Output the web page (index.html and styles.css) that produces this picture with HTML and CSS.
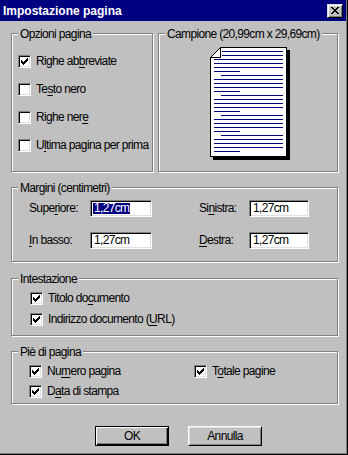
FILE: index.html
```html
<!DOCTYPE html>
<html lang="it">
<head>
<meta charset="utf-8">
<title>Impostazione pagina</title>
<link rel="stylesheet" href="styles.css">
</head>
<body>
<div class="window">
  <div class="titlebar">
    <span class="title">Impostazione pagina</span>
    <span class="close"><svg class="xglyph" width="8" height="7" viewBox="0 0 8 7"><path d="M0 0h2v1H0zM6 0h2v1H6zM1 1h2v1H1zM5 1h2v1H5zM2 2h4v1H2zM3 3h2v1H3zM2 4h4v1H2zM1 5h2v1H1zM5 5h2v1H5zM0 6h2v1H0zM6 6h2v1H6z"/></svg></span>
  </div>
  <div class="content">
    <div class="row1">
      <fieldset class="group g-opts">
        <legend>Opzioni pagina</legend>
        <div class="opts">
          <div class="chk"><span class="cb"><svg class="ck" width="7" height="7" viewBox="0 0 7 7"><path d="M0 2h1v3H0zM1 3h1v3H1zM2 4h1v3H2zM3 3h1v3H3zM4 2h1v3H4zM5 1h1v3H5zM6 0h1v3H6z"/></svg></span><span>Righe ab<u>b</u>reviate</span></div>
          <div class="chk"><span class="cb"></span><span>Te<u>s</u>to nero</span></div>
          <div class="chk"><span class="cb"></span><span>Righe ner<u>e</u></span></div>
          <div class="chk"><span class="cb"></span><span>U<u>l</u>tima pagina per prima</span></div>
        </div>
      </fieldset>
      <fieldset class="group g-sample">
        <legend>Campione (20,99cm x 29,69cm)</legend>
        <div class="sample">
          <svg width="80" height="113" viewBox="0 0 80 113" shape-rendering="crispEdges">
            <rect x="77" y="3" width="3" height="110" fill="#000"/>
            <rect x="3" y="110" width="77" height="3" fill="#000"/>
            <path d="M10.5 0.5H76.5V109.5H0.5V10.5Z" fill="#fff" stroke="#000"/>
            <path d="M0.5 10.5H10.5V0.5" fill="none" stroke="#000"/>
            <path fill="none" stroke="#000080" d="M12 4.5H73M12 8.5H73M4 12.5H73M4 16.5H73M4 20.5H73M4 24.5H30M11 28.5H73M4 32.5H73M4 36.5H73M4 40.5H73M4 44.5H30M11 48.5H73M4 52.5H73M4 56.5H73M4 60.5H73M4 64.5H30M11 68.5H73M4 72.5H73M4 76.5H73M4 80.5H73M4 84.5H30M11 88.5H73M4 92.5H73M4 96.5H73M4 100.5H73M4 104.5H30"/>
          </svg>
        </div>
      </fieldset>
    </div>

    <fieldset class="group g-margins">
      <legend>Margini (centimetri)</legend>
      <div class="margins">
        <span class="lbl">Supe<u>r</u>iore:</span>
        <div class="field w62"><span class="val sel">1,27cm</span></div>
        <span class="lbl">Si<u>n</u>istra:</span>
        <div class="field w60"><span class="val">1,27cm</span></div>
        <span class="lbl"><u>I</u>n basso:</span>
        <div class="field w62"><span class="val">1,27cm</span></div>
        <span class="lbl"><u>D</u>estra:</span>
        <div class="field w60"><span class="val">1,27cm</span></div>
      </div>
    </fieldset>

    <fieldset class="group g-head">
      <legend>Intestazione</legend>
      <div class="checks">
        <div class="chk"><span class="cb"><svg class="ck" width="7" height="7" viewBox="0 0 7 7"><path d="M0 2h1v3H0zM1 3h1v3H1zM2 4h1v3H2zM3 3h1v3H3zM4 2h1v3H4zM5 1h1v3H5zM6 0h1v3H6z"/></svg></span><span>Titolo do<u>c</u>umento</span></div>
        <div class="chk"><span class="cb"><svg class="ck" width="7" height="7" viewBox="0 0 7 7"><path d="M0 2h1v3H0zM1 3h1v3H1zM2 4h1v3H2zM3 3h1v3H3zM4 2h1v3H4zM5 1h1v3H5zM6 0h1v3H6z"/></svg></span><span>Indirizzo documento (<u>U</u>RL)</span></div>
      </div>
    </fieldset>

    <fieldset class="group g-foot">
      <legend>Piè di pagina</legend>
      <div class="foot">
        <div class="chk"><span class="cb"><svg class="ck" width="7" height="7" viewBox="0 0 7 7"><path d="M0 2h1v3H0zM1 3h1v3H1zM2 4h1v3H2zM3 3h1v3H3zM4 2h1v3H4zM5 1h1v3H5zM6 0h1v3H6z"/></svg></span><span>Nu<u>m</u>ero pagina</span></div>
        <div class="chk"><span class="cb"><svg class="ck" width="7" height="7" viewBox="0 0 7 7"><path d="M0 2h1v3H0zM1 3h1v3H1zM2 4h1v3H2zM3 3h1v3H3zM4 2h1v3H4zM5 1h1v3H5zM6 0h1v3H6z"/></svg></span><span>T<u>o</u>tale pagine</span></div>
        <div class="chk"><span class="cb"><svg class="ck" width="7" height="7" viewBox="0 0 7 7"><path d="M0 2h1v3H0zM1 3h1v3H1zM2 4h1v3H2zM3 3h1v3H3zM4 2h1v3H4zM5 1h1v3H5zM6 0h1v3H6z"/></svg></span><span>D<u>a</u>ta di stampa</span></div>
      </div>
    </fieldset>

    <div class="buttons">
      <div class="btn default">OK</div>
      <div class="btn">Annulla</div>
    </div>
  </div>
</div>
</body>
</html>
```

FILE: styles.css
```css
* { box-sizing: border-box; }

html, body {
  margin: 0;
  padding: 0;
}

body {
  width: 348px;
  height: 455px;
  overflow: hidden;
  background: #c0c0c0;
  font-family: "Liberation Sans", Arial, sans-serif;
  font-size: 12px;
  letter-spacing: -0.65px;
  line-height: 13px;
  color: #000;
}

u {
  text-decoration: underline;
  text-decoration-thickness: 1px;
  text-underline-offset: 2px;
}

.window {
  width: 348px;
  height: 455px;
  background: #c0c0c0;
  border-right: 1px solid #000;
  border-bottom: 1px solid #000;
  box-shadow: inset -1px -1px 0 #808080;
  display: flex;
  flex-direction: column;
}

/* title bar */
.titlebar {
  height: 21px;
  margin-right: 1px;
  background: #000080;
  color: #fff;
  display: flex;
  justify-content: space-between;
  align-items: flex-start;
}

.title {
  font-weight: bold;
  font-size: 12px;
  letter-spacing: 0;
  line-height: 19px;
  padding: 2px 0 0 3px;
  white-space: nowrap;
}

.close {
  width: 16px;
  height: 14px;
  margin: 4px 3px 0 0;
  background: #c0c0c0;
  border-top: 1px solid #dfdfdf;
  border-left: 1px solid #dfdfdf;
  border-right: 1px solid #000;
  border-bottom: 1px solid #000;
  box-shadow: inset 1px 1px 0 #fff, inset -1px -1px 0 #808080;
}

.xglyph {
  display: block;
  margin: 2px 0 0 3px;
}

/* content */
.content {
  padding: 4px 0 0 11px;
  display: flex;
  flex-direction: column;
  gap: 7px;
}

.row1 {
  display: flex;
  gap: 5px;
  width: 327px;
  height: 147px;
}

.group {
  margin: 0;
  padding: 0;
  min-width: 0;
  border: 1px solid #808080;
  box-shadow: 1px 1px 0 #fff, inset 1px 1px 0 #fff;
}

.group legend {
  margin-left: 6px;
  padding: 3px 2px 1px;
  line-height: 13px;
  white-space: nowrap;
  background: #c0c0c0;
}

.g-opts { width: 142px; height: 147px; }
.g-sample { width: 180px; height: 147px; }
.g-margins { width: 327px; height: 83px; }
.g-head { width: 327px; height: 66px; margin-top: 1px; }
.g-foot { width: 327px; height: 61px; }

/* checkboxes */
.chk {
  display: flex;
  align-items: flex-start;
  white-space: nowrap;
}

.cb {
  flex: none;
  width: 13px;
  height: 13px;
  margin-right: 5px;
  background: #fff;
  border-top: 1px solid #808080;
  border-left: 1px solid #808080;
  border-right: 1px solid #fff;
  border-bottom: 1px solid #fff;
  box-shadow: inset 1px 1px 0 #000, inset -1px -1px 0 #dfdfdf;
}

.ck {
  display: block;
  margin: 2px 0 0 2px;
}

.opts {
  padding: 13px 0 0 6px;
  display: flex;
  flex-direction: column;
  gap: 15px;
}

.sample {
  padding: 5px 0 0 51px;
}

.sample svg { display: block; }

/* margins */
.margins {
  padding: 4px 0 0 17px;
  display: grid;
  grid-template-columns: 61px 109px 50px 60px;
  grid-template-rows: 17px 17px;
  row-gap: 15px;
}

.lbl {
  line-height: 17px;
  white-space: nowrap;
}

.field {
  height: 17px;
  background: #fff;
  border-top: 1px solid #808080;
  border-left: 1px solid #808080;
  border-right: 1px solid #fff;
  border-bottom: 1px solid #fff;
  box-shadow: inset 1px 1px 0 #000, inset -1px -1px 0 #dfdfdf;
  padding-left: 2px;
  display: flex;
  align-items: center;
}

.w62 { width: 62px; }
.w60 { width: 60px; }

.val {
  display: inline-block;
  height: 11px;
  line-height: 11px;
  padding: 0 1px;
}

.val.sel {
  background: #000080;
  color: #fff;
}

.checks {
  padding: 5px 0 0 18px;
  display: flex;
  flex-direction: column;
  gap: 8px;
}

.foot {
  padding: 5px 0 0 17px;
  display: grid;
  grid-template-columns: 165px auto;
  row-gap: 7px;
}

/* buttons */
.buttons {
  margin-top: 15px;
  padding-left: 84px;
  display: flex;
  gap: 19px;
}

.btn {
  width: 74px;
  height: 20px;
  background: #c0c0c0;
  border-top: 1px solid #fff;
  border-left: 1px solid #fff;
  border-right: 1px solid #000;
  border-bottom: 1px solid #000;
  box-shadow: inset 1px 1px 0 #dfdfdf, inset -1px -1px 0 #808080;
  text-align: center;
  line-height: 18px;
}

.btn.default {
  border: 1px solid #000;
  box-shadow: inset 1px 1px 0 #fff, inset -1px -1px 0 #000, inset -2px -2px 0 #808080;
}
```
